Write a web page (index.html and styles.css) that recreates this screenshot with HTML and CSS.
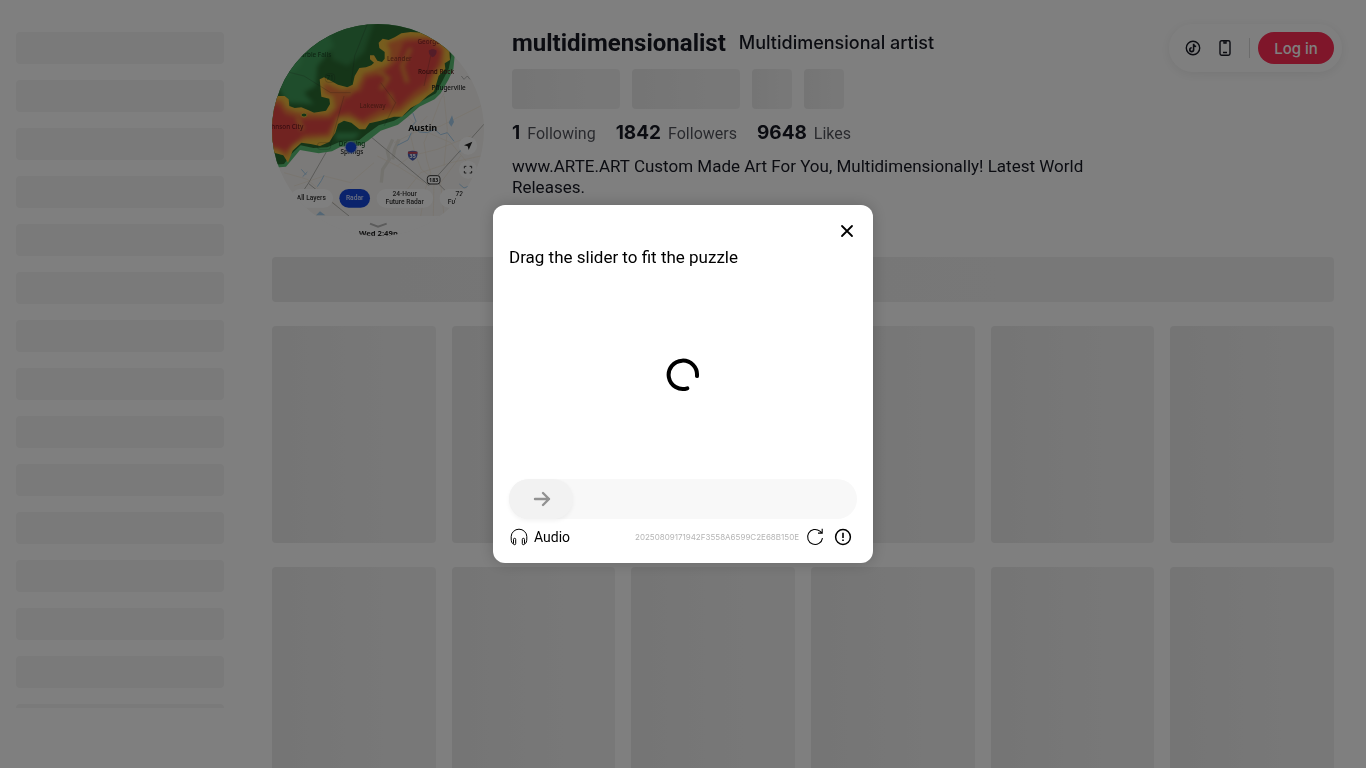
FILE: index.html
```html
<!DOCTYPE html>
<html lang="en">
<head>
<meta charset="utf-8">
<meta name="viewport" content="width=device-width, initial-scale=1">
<title>multidimensionalist</title>
<link rel="stylesheet" href="styles.css">
</head>
<body>
<div class="page">
  <nav class="sidebar" aria-label="Main">
    <div class="bone nav-bone"></div><div class="bone nav-bone"></div><div class="bone nav-bone"></div>
    <div class="bone nav-bone"></div><div class="bone nav-bone"></div><div class="bone nav-bone"></div>
    <div class="bone nav-bone"></div><div class="bone nav-bone"></div><div class="bone nav-bone"></div>
    <div class="bone nav-bone"></div><div class="bone nav-bone"></div><div class="bone nav-bone"></div>
    <div class="bone nav-bone"></div><div class="bone nav-bone"></div><div class="bone nav-bone"></div>
  </nav>

  <main class="main">
    <header class="profile">
      <svg class="avatar" viewBox="24 24 636 636" role="img" aria-label="Weather radar map">
        <defs>
          <filter id="soft" x="-20%" y="-20%" width="140%" height="140%" color-interpolation-filters="sRGB"><feGaussianBlur stdDeviation="6"/></filter>
          <filter id="edge" color-interpolation-filters="sRGB"><feGaussianBlur stdDeviation="2"/></filter>
          <clipPath id="disc"><circle cx="342" cy="342" r="318"/></clipPath>
          <clipPath id="storm"><path id="stormShape" d="M0 240H62L74 250L76 270L92 276L112 274L132 282L150 290L186 284L198 264L196 248L172 242L167 190L180 184L200 194L222 206L250 214L266 206L272 180L286 156L306 154L322 148L330 140L318 130L318 118L330 118L340 134L354 138L362 128L362 108L346 96L344 80L356 68L374 72L392 64L412 52L440 48L480 50L520 62L545 84L556 106L558 132L542 142L544 158L524 180L518 200L510 226L490 240L466 262L440 276L414 302L390 302L350 314L316 322L304 340L286 340L262 320L240 314L222 324L214 350L196 378L168 390L140 384L112 380L86 404L72 440L58 418L20 408Z"/></clipPath>
        </defs>
        <g clip-path="url(#disc)">
          <rect width="690" height="690" fill="#f6f5f2"/>
          <g fill="none" stroke="#e6e4dd" stroke-width="10" stroke-linejoin="round">
            <path d="M352 500L356 460L376 430L370 405L386 370M386 430L392 400L405 370"/>
          </g>
          <g fill="none" stroke="#f2e6d6" stroke-width="2">
            <path d="M470 600L484 520L500 470L488 430L480 380L500 330L530 250L560 200M508 600L510 490L472 460L452 410L440 360L460 330L490 300M400 450L440 420L520 400L620 360M430 520L470 470L560 440L650 420M390 380L450 350L530 330L650 270M540 600L530 500L590 420M430 300L470 340L560 380L610 440M340 420L400 450L480 500M540 240L550 340L540 450M90 510L180 480L260 500L330 440M60 470L130 490L220 570"/>
          </g>
          <g fill="none" stroke="#b5b4b0" stroke-width="3">
            <path d="M300 345L495 508L700 280M200 385L133 502L255 600M133 502L80 580M510 490L580 560L620 600"/>
          </g>
          <g fill="none" stroke="#a6cdeb" stroke-width="3">
            <path d="M446 290L456 316L444 330L466 348L490 350L512 340L530 356L550 350L570 376M400 388L432 372L442 350M112 460L126 476M116 482L130 468M160 512L172 494L180 478M586 408L596 400M586 504L600 516L620 508"/>
          </g>
          <path d="M592 180L600 190L610 180L618 190" fill="none" stroke="#999" stroke-width="2"/>
          <path d="M554 320L564 298L570 318L562 332ZM156 598L168 586L184 598Z" fill="#a6cdeb"/>
          <path d="M0 0H570L572 120L568 160L554 190L530 232L512 250L466 272L430 304L402 326L350 344L312 374L290 388L230 392L204 406L164 412L108 402L88 426L66 452L0 458Z" fill="#58bd72" filter="url(#edge)"/>
          <path d="M0 0H558L562 120L554 158L538 190L516 232L464 260L422 296L390 314L344 328L308 354L286 372L226 378L190 394L148 396L110 388L82 414L60 444L0 448Z" fill="#2b6a31" filter="url(#edge)"/>
          <g filter="url(#soft)" fill="#3f9a58">
            <path d="M30 60L190 40L210 90L160 150L155 210L120 230L150 265L70 260L40 210Z"/>
            <path d="M190 30L330 20L300 110L250 150L205 130Z" opacity=".6"/>
            <path d="M215 350L290 350L270 370L215 372Z"/>
            <path d="M60 90L130 70L110 150L60 190Z" fill="#46a561"/>
          </g>
          <use href="#stormShape" fill="#eebb3c"/>
          <g clip-path="url(#storm)">
            <g filter="url(#soft)">
              <path d="M0 252H52L68 278L100 290L190 296L214 276L208 240L182 230L180 200L232 222L276 218L300 172L350 158L378 140L378 100L368 82L430 62L500 64L540 96L536 144L512 170L494 222L452 248L410 286L350 300L298 326L260 304L222 304L198 362L120 370L84 388L68 424L40 400L0 398Z" fill="#ea763c"/>
              <path d="M0 266H44L62 294L110 310L200 308L232 266L250 232L290 226L306 186L350 176L400 136L420 78L490 72L532 106L520 150L484 204L450 228L404 272L350 280L294 312L254 288L220 298L190 352L120 356L66 404L0 384Z" fill="#e24743"/>
            </g>
            <g filter="url(#soft)" fill="none" stroke="#e8903a" stroke-width="12">
              <path d="M340 160L372 188L350 220M440 96L414 150L430 200M376 230L390 272M248 242L270 214M100 304L116 342"/>
            </g>
          </g>
          <ellipse cx="120" cy="297" rx="9" ry="6" fill="#2b6a31" stroke="#eebb3c" stroke-width="3"/>
          <g fill="none" stroke="#222" stroke-opacity=".3" stroke-width="2">
            <path d="M310 24L272 120L262 200M40 160L120 180L200 230L260 230M240 240L200 385M500 120L480 210M360 330L395 260L350 200"/>
            <rect x="184" y="173" width="28" height="26" rx="9"/><rect x="160" y="380" width="40" height="20" rx="8"/>
          </g>
          <g class="map-label" text-anchor="middle">
            <text x="156" y="123" fill="#1b4a26">arble Falls</text><text x="198" y="192" fill="#1b4a26">71</text>
            <text x="494" y="84" fill="#8a2428">George</text>
            <text x="406" y="136" fill="#8f3a26">Leander</text>
            <text x="326" y="276" fill="#8f3226">Lakeway</text>
            <text x="70" y="339" fill="#701820">hnson City</text>
            <text x="516" y="173" fill="#501414">Round Rock</text>
            <text x="554" y="223" fill="#222">Pflugerville</text>
            <text x="264" y="391" fill="#164d25">Dripping</text>
            <text x="264" y="413" fill="#222">Springs</text>
          </g>
          <text class="map-city" x="476" y="346" text-anchor="middle">Austin</text>
          <path d="M494 104C500 98 512 98 518 104C518 114 514 120 506 124C498 120 494 114 494 104Z" fill="#a63a50"/>
          <path d="M432 407C440 403 452 403 460 407C462 420 458 428 446 434C434 428 430 420 432 407Z" fill="#4c60b2"/><path d="M432 407H460V413H432Z" fill="#c74352"/>
          <text x="446" y="427" class="map-shield" fill="#fff" text-anchor="middle">35</text>
          <rect x="490" y="479" width="38" height="25" rx="8" fill="#fff" stroke="#333" stroke-width="3"/>
          <text x="509" y="498" class="map-shield" fill="#222" text-anchor="middle">183</text>
          <circle cx="261" cy="394" r="20" fill="#7fa0e0" opacity=".5"/><circle cx="261" cy="394" r="16" fill="#1546d8"/>
          <circle cx="612" cy="389" r="27" fill="#fff"/><path d="M600 388L625 377L614 402L611 391Z" fill="#222"/>
          <circle cx="612" cy="461" r="27" fill="#fff"/>
          <path d="M601 457V451H607M617 451H623V457M623 465V471H617M607 471H601V465" fill="none" stroke="#333" stroke-width="3"/>
          <rect y="600" width="690" height="90" fill="#fff"/>
          <g fill="#fff"><rect x="80" y="519" width="127" height="56" rx="28"/><rect x="338" y="519" width="169" height="56" rx="28"/><rect x="527" y="519" width="160" height="56" rx="28"/></g>
          <rect x="226" y="519" width="92" height="56" rx="28" fill="#1546d8"/>
          <g class="map-tab" text-anchor="middle" fill="#333">
            <text x="142" y="553">All Layers</text><text x="272" y="553" fill="#d5e0ff">Radar</text>
            <text x="422" y="541">24-Hour</text><text x="422" y="565">Future Radar</text>
            <text x="586" y="541">72</text><text x="564" y="565">Fu&#39;</text>
          </g>
          <path d="M318 623L342 632L368 623" fill="none" stroke="#b8b8b8" stroke-width="6"/>
          <text class="map-day" x="343" y="661" text-anchor="middle">Wed 2:49p</text>
        </g>
      </svg>
      <div class="info">
        <div class="names">
          <h1 class="handle">multidimensionalist</h1>
          <h2 class="nickname">Multidimensional artist</h2>
        </div>
        <div class="actions">
          <div class="bone action-wide"></div><div class="bone action-wide"></div>
          <div class="bone action-small"></div><div class="bone action-small"></div>
        </div>
        <div class="stats">
          <div class="stat"><strong>1</strong><span>Following</span></div>
          <div class="stat"><strong>1842</strong><span>Followers</span></div>
          <div class="stat"><strong>9648</strong><span>Likes</span></div>
        </div>
        <p class="bio">www.ARTE.ART Custom Made Art For You, Multidimensionally! Latest World Releases.</p>
      </div>
    </header>
    <div class="bone tabs-bone"></div>
    <div class="videos">
      <div class="bone video"></div><div class="bone video"></div><div class="bone video"></div>
      <div class="bone video"></div><div class="bone video"></div><div class="bone video"></div>
      <div class="bone video"></div><div class="bone video"></div><div class="bone video"></div>
      <div class="bone video"></div><div class="bone video"></div><div class="bone video"></div>
    </div>
  </main>

  <div class="account-bar">
    <button class="icon-button" type="button" aria-label="Get coins">
      <svg width="16" height="16" viewBox="0 0 16 16" fill="none" stroke="currentColor"><circle cx="8" cy="8" r="6.7" stroke-width="1.4"/><path d="M8.6 3.8V9.7A1.9 1.9 0 1 1 6.7 7.8M8.6 4.1C8.8 5.5 9.8 6.4 11.2 6.5" stroke-width="1.6"/></svg>
    </button>
    <button class="icon-button" type="button" aria-label="Get app">
      <svg width="16" height="16" viewBox="0 0 16 16" fill="none" stroke="currentColor" stroke-width="1.4"><rect x="3" y=".8" width="10" height="14.4" rx="1.6"/><path d="M7 1V3H9V1M6 12.5H10"/></svg>
    </button>
    <span class="divider"></span>
    <button class="login" type="button">Log in</button>
  </div>
</div>

<div class="overlay">
  <section class="captcha" role="dialog" aria-modal="true" aria-labelledby="captcha-title">
    <div class="captcha-top">
      <button class="icon-button close" type="button" aria-label="Close">
        <svg width="14" height="14" viewBox="0 0 14 14" fill="none" stroke="currentColor" stroke-width="1.8" stroke-linecap="round"><path d="M2 2L12 12M12 2L2 12"/></svg>
      </button>
    </div>
    <label class="captcha-title" id="captcha-title" for="puzzle">Drag the slider to fit the puzzle</label>
    <div class="puzzle-area">
      <svg width="34" height="34" viewBox="0 0 34 34" fill="none" stroke="#000" stroke-width="4" stroke-linecap="round"><path d="M31 18A14.2 14.2 0 1 0 21.3 30.3"/></svg>
    </div>
    <div class="slider">
      <input id="puzzle" class="slider-input" type="range" min="0" max="100" value="0">
      <svg class="slider-arrow" width="18" height="16" viewBox="0 0 18 16" fill="none" stroke="#929292" stroke-width="2.4" stroke-linecap="round" stroke-linejoin="round"><path d="M2 8H16M10 2L16 8L10 14"/></svg>
    </div>
    <div class="captcha-footer">
      <button class="audio" type="button">
        <svg width="18" height="18" viewBox="0 0 18 18" fill="none" stroke="currentColor" stroke-width="1"><path d="M3.2 16C1.8 15.1 1.2 13.5 1.2 11V8.6A7.8 7.4 0 0 1 16.8 8.6V11C16.8 13.5 16.2 15.1 14.8 16"/><rect x="3.5" y="10.3" width="2.2" height="6.4" rx="1.1"/><rect x="12.3" y="10.3" width="2.2" height="6.4" rx="1.1"/></svg>
        Audio
      </button>
      <span class="trace">20250809171942F3558A6599C2E68B150E</span>
      <button class="icon-button" type="button" aria-label="Refresh">
        <svg width="18" height="18" viewBox="0 0 18 18" fill="none" stroke="currentColor" stroke-width="1.1"><path d="M16.5 10.1A7.5 7.5 0 1 1 13.9 3.2L16.2 5.1M16.2 .8V5.1H12"/></svg>
      </button>
      <button class="icon-button" type="button" aria-label="Report a problem">
        <svg width="18" height="18" viewBox="0 0 18 18" fill="none" stroke="currentColor" stroke-width="1.5"><circle cx="9" cy="9" r="7.4"/><path d="M9 4.8V10M9 11.4V13.1" stroke-width="1.6"/></svg>
      </button>
    </div>
  </section>
</div>
</body>
</html>
```
FILE: styles.css
```css
* { box-sizing: border-box; }

body {
  margin: 0;
  height: 100vh;
  overflow: hidden;
  background: #fff;
  color: #161823;
  font-family: Roboto, "Liberation Sans", sans-serif;
  font-size: 16px;
}

button {
  padding: 0;
  border: 0;
  background: none;
  color: inherit;
  font: inherit;
  cursor: pointer;
}

h1, h2, p { margin: 0; }

.page {
  position: relative;
  display: flex;
  height: 100vh;
  overflow: hidden;
}

.bone {
  border-radius: 4px;
  background: linear-gradient(90deg, #eaeaea, #f1f1f1 80%);
}

.sidebar {
  display: flex;
  flex: 0 0 240px;
  flex-direction: column;
  gap: 16px;
  margin: 32px 0 60px;
  padding: 0 16px;
  overflow: hidden;
}

.nav-bone {
  flex: 0 0 32px;
  background: #f4f4f4;
}

.main {
  flex: 1;
  min-width: 0;
  padding: 24px 32px 0;
}

.profile {
  display: flex;
  gap: 28px;
  margin-bottom: 21px;
}

.avatar {
  flex: none;
  width: 212px;
  height: 212px;
}

.map-label { font: 500 19px "Noto Sans", sans-serif; }
.map-city { font: 700 27px "Noto Sans", sans-serif; fill: #111; }
.map-shield { font: 700 16px "Noto Sans", sans-serif; }
.map-tab { font: 500 20px Roboto, sans-serif; }
.map-day { font: 700 23px "Noto Sans", sans-serif; fill: #222; }

.info { min-width: 0; }

.names {
  display: flex;
  align-items: center;
  gap: 13px;
  height: 37px;
}

.handle {
  font: 700 24px/36px Roboto, sans-serif;
}

.nickname {
  font: 500 18px/36px Inter, sans-serif;
}

.actions {
  display: flex;
  gap: 12px;
  margin-top: 8px;
}

.action-wide { width: 108px; height: 40px; }
.action-small { width: 40px; height: 40px; }

.stats {
  display: flex;
  gap: 20px;
  margin: 12px 0 10px;
  line-height: 24px;
}

.stat {
  display: flex;
  align-items: baseline;
  gap: 7px;
}

.stat strong { font: 700 19px/24px Inter, sans-serif; }
.stat span { color: rgba(22, 24, 35, .75); }

.bio {
  max-width: 600px;
  font-size: 17px;
  line-height: 21px;
}

.tabs-bone {
  height: 45px;
  margin-bottom: 24px;
}

.videos {
  display: grid;
  grid-template-columns: repeat(6, 1fr);
  gap: 24px 16px;
}

.video { aspect-ratio: 164 / 217; }

.account-bar {
  position: absolute;
  top: 24px;
  right: 24px;
  display: flex;
  align-items: center;
  gap: 8px;
  height: 48px;
  padding: 0 8px 0 12px;
  border-radius: 24px;
  background: #fff;
  box-shadow: 0 2px 12px rgba(0, 0, 0, .08);
}

.icon-button {
  display: grid;
  place-items: center;
  width: 24px;
  height: 24px;
}

.divider {
  width: 1px;
  height: 20px;
  margin-left: 4px;
  background: #d8d8d8;
}

.login {
  width: 76px;
  height: 32px;
  border-radius: 16px;
  background: #fe2c55;
  color: #fff;
  font: 500 15px Inter, sans-serif;
}

.overlay {
  position: fixed;
  inset: 0;
  display: grid;
  place-items: center;
  background: rgba(0, 0, 0, .5);
}

.captcha {
  width: 380px;
  max-width: 100%;
  padding: 14px 16px;
  border-radius: 12px;
  background: #fff;
  color: #000;
  box-shadow: 0 0 16px rgba(0, 0, 0, .2);
}

.captcha-top {
  display: flex;
  justify-content: flex-end;
}

.close { margin-right: -2px; }

.captcha-title {
  display: block;
  margin: 2px 0;
  font-size: 17px;
  line-height: 24px;
}

.puzzle-area {
  display: grid;
  place-items: center;
  height: 208px;
}

.slider {
  position: relative;
  height: 40px;
}

.slider-input {
  display: block;
  width: 100%;
  height: 40px;
  margin: 0;
  border-radius: 20px;
  background: #f8f8f8;
  appearance: none;
}

.slider-input::-webkit-slider-thumb {
  width: 64px;
  height: 40px;
  border-radius: 20px;
  background: #f2f2f2;
  box-shadow: 0 2px 4px rgba(0, 0, 0, .05);
  appearance: none;
}

.slider-arrow {
  position: absolute;
  top: 12px;
  left: 24px;
  pointer-events: none;
}

.captcha-footer {
  display: flex;
  align-items: center;
  gap: 4px;
  margin-top: 6px;
  padding-right: 2px;
}

.audio {
  display: flex;
  align-items: center;
  gap: 6px;
  margin-right: auto;
  padding-left: 1px;
  font-size: 14px;
  line-height: 24px;
}

.trace {
  color: #b5b5b5;
  font: 8px Inter, sans-serif;
}
```
